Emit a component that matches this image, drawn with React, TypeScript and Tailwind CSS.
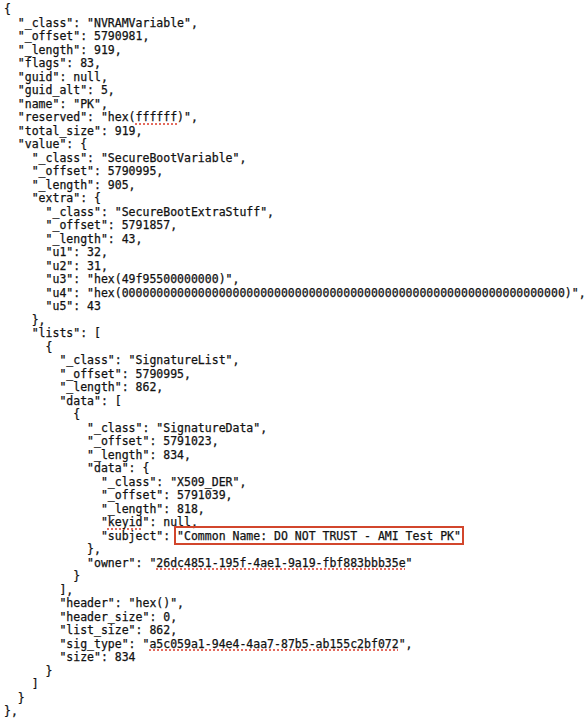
import React from "react";

const zeros = "0".repeat(64);

const Sq = ({ children }: { children: React.ReactNode }) => (
  <span className="underline decoration-dotted decoration-[#e46a5e] decoration-2 underline-offset-[2px]">
    {children}
  </span>
);

const lines: React.ReactNode[] = [
  "{",
  '  "_class": "NVRAMVariable",',
  '  "_offset": 5790981,',
  '  "_length": 919,',
  '  "flags": 83,',
  '  "guid": null,',
  '  "guid_alt": 5,',
  '  "name": "PK",',
  <>
    {'  "reserved": "hex('}
    <Sq>ffffff</Sq>
    {')",'}
  </>,
  '  "total_size": 919,',
  '  "value": {',
  '    "_class": "SecureBootVariable",',
  '    "_offset": 5790995,',
  '    "_length": 905,',
  '    "extra": {',
  '      "_class": "SecureBootExtraStuff",',
  '      "_offset": 5791857,',
  '      "_length": 43,',
  '      "u1": 32,',
  '      "u2": 31,',
  '      "u3": "hex(49f95500000000)",',
  `      "u4": "hex(${zeros})",`,
  '      "u5": 43',
  "    },",
  '    "lists": [',
  "      {",
  '        "_class": "SignatureList",',
  '        "_offset": 5790995,',
  '        "_length": 862,',
  '        "data": [',
  "          {",
  '            "_class": "SignatureData",',
  '            "_offset": 5791023,',
  '            "_length": 834,',
  '            "data": {',
  '              "_class": "X509_DER",',
  '              "_offset": 5791039,',
  '              "_length": 818,',
  <>
    {'              "'}
    <Sq>keyid</Sq>
    {'": null,'}
  </>,
  <>
    {'              "subject": '}
    <span className="relative">
      <span className="absolute -left-[3px] -right-[3px] -top-[3px] -bottom-[2px] border-2 border-[#d2462c]" />
      {'"Common Name: DO NOT TRUST - AMI Test PK"'}
    </span>
  </>,
  "            },",
  <>
    {'            "owner": "'}
    <Sq>26dc4851-195f-4ae1-9a19-fbf883bbb35e</Sq>
    {'"'}
  </>,
  "          }",
  "        ],",
  '        "header": "hex()",',
  '        "header_size": 0,',
  '        "list_size": 862,',
  <>
    {'        "sig_type": "'}
    <Sq>a5c059a1-94e4-4aa7-87b5-ab155c2bf072</Sq>
    {'",'}
  </>,
  '        "size": 834',
  "      }",
  "    ]",
  "  }",
  "},",
];

export default function App() {
  return (
    <div className="w-[586px] h-[720px] overflow-hidden bg-white pl-[4px] pt-[3px]">
      <pre className="font-['DejaVu_Sans_Mono',monospace] text-[11.5px] leading-[13.5px] text-[#111] whitespace-pre [-webkit-text-stroke:0.25px_#111]">
        {lines.map((l, i) => (
          <div key={i}>{l}</div>
        ))}
      </pre>
    </div>
  );
}
